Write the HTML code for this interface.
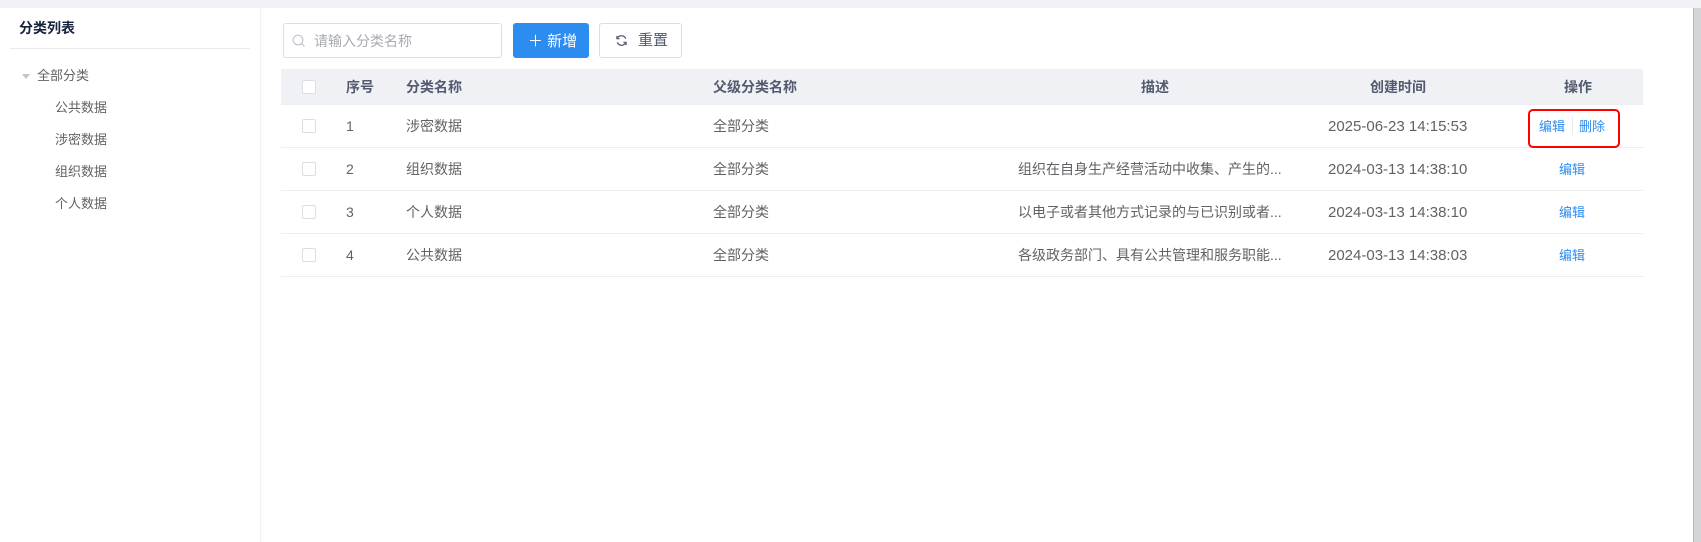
<!DOCTYPE html>
<html><head><meta charset="utf-8"><style>
*{box-sizing:border-box;margin:0;padding:0}
body{width:1701px;height:542px;background:#f0f2f5;font-family:"Liberation Sans","Noto Sans CJK SC",sans-serif;position:relative;overflow:hidden;color:#606266;font-size:14px}
.abs{position:absolute}
.left{left:0;top:8px;width:260px;height:534px;background:#fff}
.main{left:261px;top:8px;width:1432px;height:534px;background:#fff}
.scroll{left:1693px;top:8px;width:8px;height:534px;background:#d4d5d8;border-left:1px solid #b8b9bc}
.t{position:absolute;white-space:nowrap;line-height:16px}
.cb{position:absolute;left:302px;width:14px;height:14px;border:1px solid #dcdfe6;border-radius:2px;background:#fff}
.line{position:absolute;left:281px;width:1362px;height:1px;background:#ebeef5}
.hd{color:#515a6e;font-weight:bold}
.link{color:#2d8cf0;font-size:13px}
.d{font-size:15px}
</style></head><body>
<div class="abs left"></div>
<div class="abs main"></div>
<div class="abs scroll"></div>

<div class="t" style="left:19px;top:20px;font-weight:bold;color:#17233d;font-size:14px">分类列表</div>
<div class="abs" style="left:10px;top:48px;width:240px;height:1px;background:#e8eaec"></div>
<div class="abs" style="left:22px;top:74px;width:0;height:0;border-left:4px solid transparent;border-right:4px solid transparent;border-top:5px solid #c0c4cc"></div>
<div class="t" style="left:37px;top:68px;font-size:13px">全部分类</div>
<div class="t" style="left:55px;top:100px;font-size:13px">公共数据</div>
<div class="t" style="left:55px;top:132px;font-size:13px">涉密数据</div>
<div class="t" style="left:55px;top:164px;font-size:13px">组织数据</div>
<div class="t" style="left:55px;top:196px;font-size:13px">个人数据</div>

<div class="abs" style="left:283px;top:23px;width:219px;height:35px;border:1px solid #dcdee2;border-radius:3px"></div>
<svg class="abs" style="left:292px;top:34px" width="14" height="14" viewBox="0 0 14 14"><circle cx="6" cy="6" r="4.8" fill="none" stroke="#c0c4cc" stroke-width="1.2"/><path d="M9.5 9.5L12.5 12.5" stroke="#c0c4cc" stroke-width="1.2"/></svg>
<div class="t" style="left:314px;top:33px;color:#a8abb2">请输入分类名称</div>
<div class="abs" style="left:513px;top:23px;width:76px;height:35px;background:#2d8cf0;border-radius:3px"></div>
<div class="t" style="left:528px;top:34px;color:#fff;font-size:15px">＋ 新增</div>
<div class="abs" style="left:599px;top:23px;width:83px;height:35px;border:1px solid #dcdee2;border-radius:3px"></div>
<svg class="abs" style="left:615px;top:34px" width="13" height="13" viewBox="0 0 14 14"><path d="M11.5 5A5 5 0 0 0 2.5 4.5M2.5 9A5 5 0 0 0 11.5 9.5" fill="none" stroke="#515a6e" stroke-width="1.4"/><path d="M2 2v3h3M12 12V9H9" fill="none" stroke="#515a6e" stroke-width="1.2"/></svg>
<div class="t" style="left:638px;top:33px;color:#515a6e;font-size:15px">重置</div>

<div class="abs" style="left:281px;top:69px;width:1362px;height:35px;background:#f0f1f5"></div>
<div class="cb" style="top:80px"></div>
<div class="t hd" style="left:346px;top:79px">序号</div>
<div class="t hd" style="left:406px;top:79px">分类名称</div>
<div class="t hd" style="left:713px;top:79px">父级分类名称</div>
<div class="t hd" style="left:1141px;top:79px">描述</div>
<div class="t hd" style="left:1370px;top:79px">创建时间</div>
<div class="t hd" style="left:1564px;top:79px">操作</div>

<div class="line" style="top:104px"></div>
<div class="line" style="top:147px"></div>
<div class="line" style="top:190px"></div>
<div class="line" style="top:233px"></div>
<div class="line" style="top:276px"></div>

<div class="cb" style="top:119px"></div>
<div class="t" style="left:346px;top:118px">1</div>
<div class="t" style="left:406px;top:118px">涉密数据</div>
<div class="t" style="left:713px;top:118px">全部分类</div>
<div class="t d" style="left:1328px;top:119px">2025-06-23 14:15:53</div>
<div class="abs" style="left:1528px;top:109px;width:92px;height:39px;border:2px solid #f00;border-radius:5px"></div>
<div class="t link" style="left:1539px;top:119px">编辑</div>
<div class="abs" style="left:1572px;top:117px;width:1px;height:18px;background:#e8eaec"></div>
<div class="t link" style="left:1579px;top:119px">删除</div>

<div class="cb" style="top:162px"></div>
<div class="t" style="left:346px;top:161px">2</div>
<div class="t" style="left:406px;top:161px">组织数据</div>
<div class="t" style="left:713px;top:161px">全部分类</div>
<div class="t" style="left:1018px;top:161px">组织在自身生产经营活动中收集、产生的...</div>
<div class="t d" style="left:1328px;top:162px">2024-03-13 14:38:10</div>
<div class="t link" style="left:1559px;top:162px">编辑</div>

<div class="cb" style="top:205px"></div>
<div class="t" style="left:346px;top:204px">3</div>
<div class="t" style="left:406px;top:204px">个人数据</div>
<div class="t" style="left:713px;top:204px">全部分类</div>
<div class="t" style="left:1018px;top:204px">以电子或者其他方式记录的与已识别或者...</div>
<div class="t d" style="left:1328px;top:205px">2024-03-13 14:38:10</div>
<div class="t link" style="left:1559px;top:205px">编辑</div>

<div class="cb" style="top:248px"></div>
<div class="t" style="left:346px;top:247px">4</div>
<div class="t" style="left:406px;top:247px">公共数据</div>
<div class="t" style="left:713px;top:247px">全部分类</div>
<div class="t" style="left:1018px;top:247px">各级政务部门、具有公共管理和服务职能...</div>
<div class="t d" style="left:1328px;top:248px">2024-03-13 14:38:03</div>
<div class="t link" style="left:1559px;top:248px">编辑</div>
</body></html>
